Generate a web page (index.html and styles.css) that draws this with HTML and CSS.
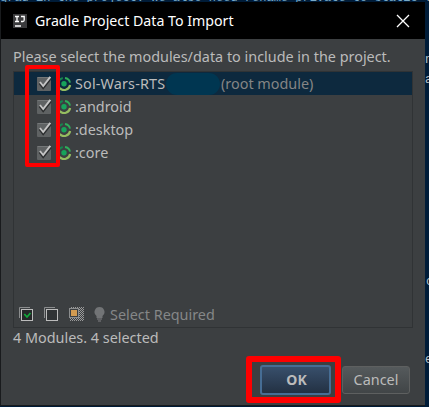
FILE: index.html
```
<!DOCTYPE html>
<html lang="en">
<head>
<meta charset="utf-8">
<title>Gradle Project Data To Import</title>
<link rel="stylesheet" href="styles.css">
</head>
<body>
<svg class="defs" aria-hidden="true">
  <symbol id="check" viewBox="0 0 16 16">
    <rect x="1" y="2" width="14" height="14" rx="1" fill="#5f6263"/>
    <path d="M1.5 2.5H14.5" stroke="#747778"/>
    <path d="M4 8L7.2 12.2L14.5 3" fill="none" stroke="#2b2d2e" stroke-width="3"/>
    <path d="M4 7L7.2 11L14.3 1.8" fill="none" stroke="#c5c5c5" stroke-width="2"/>
  </symbol>
  <symbol id="gradle" viewBox="0 0 14 14">
    <circle cx="6" cy="6.8" r="2.7" fill="#17a45b"/>
    <path d="M.6 9.3A6 6 0 0 1 4.8 1" fill="none" stroke="#16874f" stroke-width="1.9"/>
    <path d="M7 1A5.8 5.8 0 0 1 12 5.6" fill="none" stroke="#2fae5b" stroke-width="1.9"/>
    <path d="M12.1 8A6 6 0 0 1 1.7 11" fill="none" stroke="#95bd60" stroke-width="2.2"/>
  </symbol>
</svg>
<div class="editor" aria-hidden="true">
  <span class="code code-top">grad in the project. We also need rename private to static</span>
  <span class="code c1">r</span><span class="code c2">n</span><span class="code c3">a</span><span class="code c4">c</span><span class="code c5">e</span>
</div>
<main class="dialog">
  <header class="titlebar">
    <svg class="logo" viewBox="0 0 14 14"><rect width="14" height="14" fill="#3b3b3d"/><path d="M2 2.5H6M4 2.5V7.5M2 7.5H6M8 2.5H11.2V6Q11.2 7.5 9.8 7.5H8M2 12H8" fill="none" stroke="#fff" stroke-width="1.3"/></svg>
    <h1 class="title">Gradle Project Data To Import</h1>
    <svg class="close" viewBox="0 0 14 14"><path d="M1 1L13 13M13 1L1 13" stroke="#fff" stroke-width="1.3"/></svg>
  </header>
  <section class="content">
    <p class="prompt">Please select the modules/data to include in the project.</p>
    <div class="panel">
      <ul class="modules">
        <li class="row selected"><svg class="check"><use href="#check"/></svg><svg class="gradle"><use href="#gradle"/></svg><span class="name root">Sol-Wars-RTS</span><span class="redacted"></span><span class="note">(root module)</span></li>
        <li class="row"><svg class="check"><use href="#check"/></svg><svg class="gradle"><use href="#gradle"/></svg><span class="name">:android</span></li>
        <li class="row"><svg class="check"><use href="#check"/></svg><svg class="gradle"><use href="#gradle"/></svg><span class="name">:desktop</span></li>
        <li class="row"><svg class="check"><use href="#check"/></svg><svg class="gradle"><use href="#gradle"/></svg><span class="name">:core</span></li>
      </ul>
      <div class="toolbar">
        <svg class="tool" viewBox="0 0 15 15"><path d="M.5 11V.5H11" fill="none" stroke="#8b8d8e"/><rect x="2.5" y="2.5" width="11" height="11" fill="#252829" stroke="#bcbcbc"/><path d="M5.3 7L8 10L11.5 6" fill="none" stroke="#12a83b" stroke-width="1.8"/></svg>
        <svg class="tool" viewBox="0 0 15 15"><path d="M.5 11V.5H11" fill="none" stroke="#8b8d8e"/><rect x="2.5" y="2.5" width="11" height="11" fill="#303335" stroke="#bcbcbc"/></svg>
        <svg class="tool" viewBox="0 0 15 15"><defs><pattern id="dots" width="2" height="2" patternUnits="userSpaceOnUse"><path d="M0 0h1v1H0zM1 1h1v1H1z" fill="#999"/></pattern></defs><rect x="1" width="14" height="14" fill="url(#dots)"/><rect x=".5" y="1.5" width="9" height="9" fill="#3c3f41" stroke="#8b8d8e"/><rect x="2" y="3" width="6" height="6" fill="#d39b51"/></svg>
        <span class="required"><svg class="bulb" viewBox="0 0 11 15"><path d="M5.5 0A5 5 0 0 1 8.5 9V11H2.5V9A5 5 0 0 1 5.5 0Z" fill="#727476"/><path d="M3 12H8M4 14H7" stroke="#696b6d" stroke-width="1.3"/></svg>Select Required</span>
      </div>
    </div>
    <p class="status">4 Modules. 4 selected</p>
    <footer class="actions">
      <button class="btn ok">OK</button>
      <button class="btn cancel">Cancel</button>
    </footer>
  </section>
</main>
<div class="mark mark-checks"></div>
<div class="mark mark-ok"></div>
</body>
</html>
```
FILE: styles.css
```
* { box-sizing: border-box; margin: 0; padding: 0; }
body {
  position: relative;
  width: 429px;
  height: 407px;
  overflow: hidden;
  background: #001c38;
  padding: 2px 4px 1px 0;
  font: 14.4px/20px "Noto Sans", "Open Sans", sans-serif;
  color: #bbb;
}
svg { display: block; flex: none; }
.defs { position: absolute; width: 0; height: 0; }
.editor { position: absolute; inset: 0; overflow: hidden; }
.code { position: absolute; font: 12px/14px "Liberation Mono", monospace; color: #bcc4ca; white-space: nowrap; }
.code-top { left: 0; top: -9px; color: #78a9c7; }
.c1 { left: 426px; top: -9px; }
.c2 { left: 425px; top: 53px; }
.c3 { left: 425px; top: 73px; }
.c4 { left: 426px; top: 275px; }
.c5 { left: 425px; top: 353px; }
.dialog {
  position: relative;
  display: flex;
  flex-direction: column;
  height: 404px;
  background: #3c3f41;
  border: 1px solid #191b1d;
  border-top-width: 0;
  border-right: 0;
}
.titlebar { display: flex; align-items: center; height: 37px; background: #000; padding: 0 15px 0 12px; }
.logo { width: 14px; height: 14px; }
.title { flex: 1; margin-left: 8px; font-size: 14.2px; font-weight: 400; color: #fff; white-space: nowrap; }
.close { width: 14px; height: 14px; }
.content { display: flex; flex-direction: column; flex: 1; padding: 8px 12px 0; }
.prompt { height: 24px; white-space: nowrap; }
.panel { display: flex; flex-direction: column; justify-content: space-between; width: 400px; height: 257px; border: 1px solid #303335; }
.modules { list-style: none; }
.row { display: flex; align-items: center; height: 23px; padding-left: 22px; }
.selected { background: #0d293e; }
.check { width: 16px; height: 16px; margin-top: -2px; }
.gradle { width: 14px; height: 14px; margin-left: 6px; }
.name { margin-left: 3px; white-space: nowrap; }
.root { width: 92px; letter-spacing: .15px; }
.redacted { width: 54px; height: 22px; margin-left: -1px; border-radius: 11px; background: #003651; }
.note { margin-left: 1px; color: #858585; white-space: nowrap; }
.toolbar { display: flex; align-items: center; height: 25px; padding-left: 5px; gap: 10px; }
.tool { width: 15px; height: 15px; }
.required { display: flex; align-items: center; gap: 5px; color: #858788; white-space: nowrap; }
.bulb { width: 11px; height: 15px; }
.status { height: 20px; white-space: nowrap; }
.actions { display: flex; justify-content: flex-end; align-items: center; gap: 11px; margin-top: 17px; padding-right: 3px; }
.btn { font: inherit; color: #bbb; border-radius: 3px; }
.ok { width: 71px; height: 30px; padding-left: 2px; border: 2px solid #466d94; background: linear-gradient(#384f6b, #233143); font-size: 14px; font-weight: 700; }
.cancel { width: 68px; height: 28px; border: 1px solid #5e6060; background: linear-gradient(#555a5c, #414547); }
.mark { position: absolute; border: 4px solid #fe0000; border-radius: 2px; }
.mark-checks { left: 25px; top: 65px; width: 35px; height: 102px; }
.mark-ok { left: 246px; top: 356px; width: 95px; height: 47px; border-width: 6px; border-radius: 3px; }
```
